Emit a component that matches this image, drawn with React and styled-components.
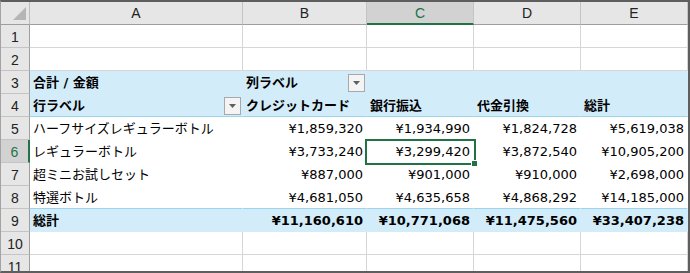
import React from 'react'
import styled, { createGlobalStyle, css } from 'styled-components'

const GlobalStyle = createGlobalStyle`
  html, body { margin: 0; padding: 0; background: #fff; }
  body { font-family: "DejaVu Sans", "Noto Sans CJK JP", sans-serif; }
`

const GREEN = '#217346'
const PIVOT = '#d2ecf9'
const PIVOT_LINE = '#9ad4ef'
const GRID = '#d6d6d6'

const Frame = styled.div`
  width: 690px;
  height: 273px;
  box-sizing: border-box;
  border-top: 2px solid #5e5e5e;
  border-right: 2px solid #5e5e5e;
  border-bottom: 2px solid #5e5e5e;
  border-left: 1px solid #a3a3a3;
  overflow: hidden;
`

const Sheet = styled.div`
  display: grid;
  grid-template-columns: 29px 213px 124px 107px 107px 107px;
  grid-auto-rows: 23px;
`

const HeadBase = css`
  box-sizing: border-box;
  background: #e6e6e6;
  color: #222;
  font-family: "Liberation Sans", "DejaVu Sans", sans-serif;
  font-size: 14px;
  display: flex;
  align-items: center;
  justify-content: center;
`

const Corner = styled.div`
  ${HeadBase}
  border-right: 1px solid #bdbdbd;
  border-bottom: 1px solid #9e9e9e;
  justify-content: flex-end;
  align-items: flex-end;
  padding: 0 3px 4px 0;
`

const CornerMark = styled.div`
  width: 0;
  height: 0;
  border-left: 13px solid transparent;
  border-bottom: 13px solid #b5b5b5;
`

const ColHead = styled.div`
  ${HeadBase}
  border-right: 1px solid #c4c4c4;
  border-bottom: 1px solid #9e9e9e;
  ${p => p.$active && css`
    background: #d2d2d2;
    color: ${GREEN};
    border-bottom: 2px solid ${GREEN};
  `}
`

const RowHead = styled.div`
  ${HeadBase}
  border-right: 1px solid #9e9e9e;
  border-bottom: 1px solid #c4c4c4;
  padding-top: 1px;
  ${p => p.$active && css`
    background: #d2d2d2;
    color: ${GREEN};
    border-right: 2px solid ${GREEN};
  `}
`

const Cell = styled.div`
  box-sizing: border-box;
  position: relative;
  display: flex;
  align-items: center;
  justify-content: ${p => (p.$right ? 'flex-end' : 'space-between')};
  padding: 1px 3px 0 3px;
  font-size: 13px;
  color: #000;
  white-space: nowrap;
  font-weight: ${p => (p.$bold ? 700 : 400)};
  background: ${p => (p.$fill ? PIVOT : '#fff')};
  border-right: 1px solid ${p => (p.$pivot ? 'transparent' : GRID)};
  border-bottom: 1px solid ${p => (p.$line ? PIVOT_LINE : p.$pivot ? 'transparent' : GRID)};
  ${p => p.$selected && css`z-index: 2;`}
`

const CellText = styled.span`
  line-height: 1;
`

const FilterButton = styled.div`
  box-sizing: border-box;
  align-self: flex-end;
  width: 17px;
  height: 18px;
  margin-right: -2px;
  margin-bottom: 1px;
  border: 1px solid #a8a8a8;
  background: #f4f4f4;
  display: flex;
  align-items: center;
  justify-content: center;
`

const Selection = styled.div`
  position: absolute;
  left: -2px;
  top: -1px;
  width: 111px;
  height: 26px;
  box-sizing: border-box;
  border: 2px solid ${GREEN};
  pointer-events: none;
`

const FillHandle = styled.div`
  position: absolute;
  right: -4px;
  bottom: -4px;
  width: 7px;
  height: 7px;
  box-sizing: border-box;
  background: ${GREEN};
  border: 1px solid #fff;
`

const Arrow = () => (
  <svg width="7" height="4" viewBox="0 0 7 4">
    <path d="M0 0 H7 L3.5 4 Z" fill="#5f5f5f" />
  </svg>
)

const COLS = ['A', 'B', 'C', 'D', 'E']

const ROWS = [
  { n: 1 },
  { n: 2 },
  { n: 3, pivot: true, fill: true, bold: true, cells: ['合計 / 金額', '列ラベル', '', '', ''], filters: [1] },
  { n: 4, pivot: true, fill: true, bold: true, line: true, cells: ['行ラベル', 'クレジットカード', '銀行振込', '代金引換', '総計'], filters: [0] },
  { n: 5, pivot: true, cells: ['ハーフサイズレギュラーボトル', '¥1,859,320', '¥1,934,990', '¥1,824,728', '¥5,619,038'], numbers: true },
  { n: 6, pivot: true, cells: ['レギュラーボトル', '¥3,733,240', '¥3,299,420', '¥3,872,540', '¥10,905,200'], numbers: true },
  { n: 7, pivot: true, cells: ['超ミニお試しセット', '¥887,000', '¥901,000', '¥910,000', '¥2,698,000'], numbers: true },
  { n: 8, pivot: true, line: true, cells: ['特選ボトル', '¥4,681,050', '¥4,635,658', '¥4,868,292', '¥14,185,000'], numbers: true },
  { n: 9, pivot: true, fill: true, bold: true, cells: ['総計', '¥11,160,610', '¥10,771,068', '¥11,475,560', '¥33,407,238'], numbers: true },
  { n: 10 },
  { n: 11 },
]

const ACTIVE_COL = 2
const ACTIVE_ROW = 6

export default function App() {
  return (
    <>
      <GlobalStyle />
      <Frame>
        <Sheet>
          <Corner><CornerMark /></Corner>
          {COLS.map((c, i) => (
            <ColHead key={c} $active={i === ACTIVE_COL}>{c}</ColHead>
          ))}
          {ROWS.map(row => (
            <React.Fragment key={row.n}>
              <RowHead $active={row.n === ACTIVE_ROW}>{row.n}</RowHead>
              {COLS.map((c, i) => {
                const text = row.cells ? row.cells[i] : ''
                const hasFilter = row.filters && row.filters.includes(i)
                const selected = row.n === ACTIVE_ROW && i === ACTIVE_COL
                return (
                  <Cell
                    key={c}
                    $pivot={row.pivot}
                    $fill={row.fill}
                    $bold={row.bold}
                    $line={row.line}
                    $right={row.numbers && i > 0}
                    $selected={selected}
                  >
                    <CellText>{text}</CellText>
                    {hasFilter && <FilterButton><Arrow /></FilterButton>}
                    {selected && <Selection><FillHandle /></Selection>}
                  </Cell>
                )
              })}
            </React.Fragment>
          ))}
        </Sheet>
      </Frame>
    </>
  )
}
